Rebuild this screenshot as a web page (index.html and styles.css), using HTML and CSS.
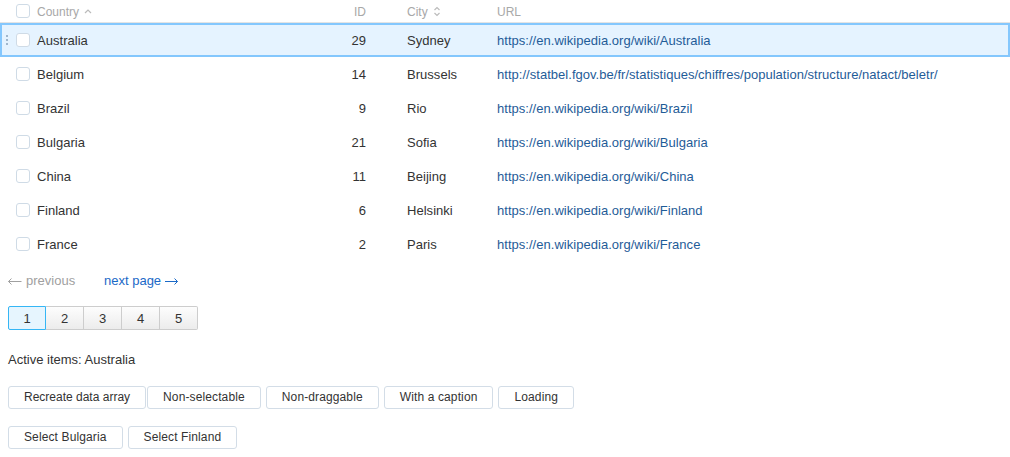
FILE: index.html
```html
<!DOCTYPE html>
<html>
<head>
<meta charset="utf-8">
<link rel="stylesheet" href="styles.css">
</head>
<body>
<div class="table">
  <div class="row head">
    <div class="c-sel"><span class="cb"></span></div>
    <div class="c-country">Country <svg class="sort" width="8" height="6" viewBox="0 0 8 6"><path d="M1 5 L4 2 L7 5" fill="none" stroke="#bbb" stroke-width="1.2"/></svg></div>
    <div class="c-id">ID</div>
    <div class="c-city">City <svg class="sort2" width="8" height="11" viewBox="0 0 8 11"><path d="M1.5 4 L4 1.5 L6.5 4 M1.5 7 L4 9.5 L6.5 7" fill="none" stroke="#bbb" stroke-width="1.2"/></svg></div>
    <div class="c-url">URL</div>
  </div>
  <div class="row active">
    <div class="c-sel"><span class="drag"></span><span class="cb white"></span></div>
    <div class="c-country">Australia</div><div class="c-id">29</div><div class="c-city">Sydney</div>
    <div class="c-url"><a>https://en.wikipedia.org/wiki/Australia</a></div>
  </div>
  <div class="row">
    <div class="c-sel"><span class="cb"></span></div>
    <div class="c-country">Belgium</div><div class="c-id">14</div><div class="c-city">Brussels</div>
    <div class="c-url"><a>http://statbel.fgov.be/fr/statistiques/chiffres/population/structure/natact/beletr/</a></div>
  </div>
  <div class="row">
    <div class="c-sel"><span class="cb"></span></div>
    <div class="c-country">Brazil</div><div class="c-id">9</div><div class="c-city">Rio</div>
    <div class="c-url"><a>https://en.wikipedia.org/wiki/Brazil</a></div>
  </div>
  <div class="row">
    <div class="c-sel"><span class="cb"></span></div>
    <div class="c-country">Bulgaria</div><div class="c-id">21</div><div class="c-city">Sofia</div>
    <div class="c-url"><a>https://en.wikipedia.org/wiki/Bulgaria</a></div>
  </div>
  <div class="row">
    <div class="c-sel"><span class="cb"></span></div>
    <div class="c-country">China</div><div class="c-id">11</div><div class="c-city">Beijing</div>
    <div class="c-url"><a>https://en.wikipedia.org/wiki/China</a></div>
  </div>
  <div class="row">
    <div class="c-sel"><span class="cb"></span></div>
    <div class="c-country">Finland</div><div class="c-id">6</div><div class="c-city">Helsinki</div>
    <div class="c-url"><a>https://en.wikipedia.org/wiki/Finland</a></div>
  </div>
  <div class="row">
    <div class="c-sel"><span class="cb"></span></div>
    <div class="c-country">France</div><div class="c-id">2</div><div class="c-city">Paris</div>
    <div class="c-url"><a>https://en.wikipedia.org/wiki/France</a></div>
  </div>
</div>
<div class="content">
  <div class="pager-links">
    <span class="prev"><svg class="arr" width="14" height="7" viewBox="0 0 14 7"><path d="M0.5 3.5 H13.5 M3.5 0.5 L0.5 3.5 L3.5 6.5" fill="none" stroke="currentColor" stroke-width="1"/></svg>previous</span>
    <a class="next">next page<svg class="arr after" width="13" height="7" viewBox="0 0 13 7"><path d="M0 3.5 H12.5 M9.5 0.5 L12.5 3.5 L9.5 6.5" fill="none" stroke="currentColor" stroke-width="1"/></svg></a>
  </div>
  <div class="pages">
    <span class="pg current">1</span><span class="pg">2</span><span class="pg">3</span><span class="pg">4</span><span class="pg">5</span>
  </div>
  <div class="active-items">Active items: Australia</div>
  <div class="btns first">
    <button class="btn tight">Recreate data array</button>
    <button class="btn">Non-selectable</button>
    <button class="btn">Non-draggable</button>
    <button class="btn">With a caption</button>
    <button class="btn">Loading</button>
  </div>
  <div class="btns">
    <button class="btn">Select Bulgaria</button>
    <button class="btn">Select Finland</button>
  </div>
</div>
</body>
</html>
```
FILE: styles.css
```css
* { box-sizing: border-box; }
body {
  margin: 0;
  font-family: "Liberation Sans", Arial, sans-serif;
  font-size: 13px;
  color: #333;
  background: #fff;
}
.table { width: 1010px; }
.row {
  display: grid;
  grid-template-columns: 37px 263px 66px 130px 1fr;
  align-items: center;
  height: 34px;
  border: 2px solid transparent;
}
.row.head {
  height: 23px;
  border: 0;
  border-bottom: 1px solid #e4e4e4;
  font-size: 12px;
  color: #a8a8a8;
  padding-top: 1px;
}
.row.active {
  background: #e5f3ff;
  border-color: #84c7fd;
}
.c-sel { position: relative; height: 100%; }
.cb {
  position: absolute;
  left: 16px;
  top: 50%;
  margin-top: -7px;
  width: 14px;
  height: 14px;
  border: 1px solid #cfdbe6;
  border-radius: 3px;
  background: #fff;
}
.head .cb { left: 16px; margin-top: -8px; }
.row:not(.head) .cb { left: 14px; }
.drag {
  position: absolute;
  left: 4px;
  top: 50%;
  margin-top: -6px;
  width: 2px;
  height: 12px;
  background: radial-gradient(circle, #9fb6cc 0.8px, transparent 1.1px) 0 0 / 2px 4px repeat-y;
}
.c-id { text-align: right; }
.c-city { padding-left: 41px; }
.c-country, .c-city { display: flex; align-items: center; gap: 4px; }
.row:not(.head) .c-id { margin-right: 2px; }
.row:not(.head) .c-country { margin-left: -2px; }
.row:not(.head) .c-city { margin-left: -2px; }
.c-url { padding-left: 1px; }
.row:not(.head) .c-url { margin-left: -2px; }
.row:not(.head) { letter-spacing: 0.03px; }
.sort { margin-left: 1px; margin-top: -1px; }
.sort2 { margin-left: 1px; }
.c-url a { color: #1f5c98; text-decoration: none; white-space: nowrap; }
.content { padding: 0 8px; }
.pager-links {
  margin-top: 12px;
  height: 16px;
  line-height: 16px;
  display: flex;
}
.prev { color: #a0a0a0; width: 96px; display: flex; align-items: center; }
.next { color: #1a69c7; display: flex; align-items: center; }
.arr { margin-right: 4px; margin-top: 1px; }
.arr.after { margin-right: 0; margin-left: 4px; }
.pages {
  margin-top: 17px;
  display: flex;
  height: 24px;
}
.pg {
  width: 38px;
  height: 24px;
  line-height: 23px;
  text-align: center;
  border: 1px solid #cdcdcd;
  border-left-width: 0;
  background: linear-gradient(#fdfdfd, #ececec);
  color: #333;
}
.pg:first-child { border-left-width: 1px; border-radius: 2px 0 0 2px; }
.pg:last-child { border-radius: 0 2px 2px 0; }
.pg.current {
  background: #e6f5fe;
  border: 1px solid #35b6f5;
}
.active-items { margin-top: 22px; line-height: 16px; }
.btns { display: flex; gap: 5px; margin-top: 18px; }
.btns + .btns { margin-top: 17px; }
.btn.tight { margin-right: -4px; letter-spacing: 0; }
.btn {
  font-family: "Liberation Sans", Arial, sans-serif;
  font-size: 12px;
  letter-spacing: 0.12px;
  color: #333;
  background: #fff;
  border: 1px solid #d3dde7;
  border-radius: 3px;
  height: 23px;
  padding: 0 15px;
  line-height: 21px;
  margin: 0;
}
```
